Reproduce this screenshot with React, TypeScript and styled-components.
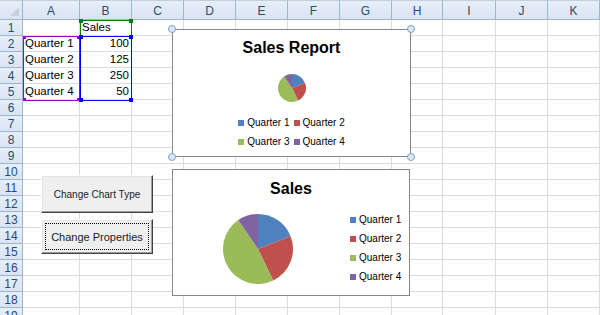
import React from 'react';
import styled, { createGlobalStyle, css } from 'styled-components';

const GlobalStyle = createGlobalStyle`
  html, body {
    margin: 0;
    padding: 0;
    background: #fff;
    overflow: hidden;
  }
  body {
    font-family: 'Liberation Sans', Arial, sans-serif;
  }
`;

const COLUMNS = ['A', 'B', 'C', 'D', 'E', 'F', 'G', 'H', 'I', 'J', 'K'];
const COLUMN_WIDTHS = [57, 52, 52, 52, 52, 52, 52, 51, 53, 52, 52];
const ROW_COUNT = 19;

const quarters = [
  { label: 'Quarter 1', value: 100, color: '#4F81BD' },
  { label: 'Quarter 2', value: 125, color: '#C0504D' },
  { label: 'Quarter 3', value: 250, color: '#9BBB59' },
  { label: 'Quarter 4', value: 50, color: '#8064A2' },
];

const cellData: Record<number, [string, string]> = {
  1: ['', 'Sales'],
  2: ['Quarter 1', '100'],
  3: ['Quarter 2', '125'],
  4: ['Quarter 3', '250'],
  5: ['Quarter 4', '50'],
};

type Corner = 'tl' | 'tr' | 'bl' | 'br';
const CORNERS: Corner[] = ['tl', 'tr', 'bl', 'br'];

const Sheet = styled.div`
  position: relative;
  width: 600px;
  height: 315px;
  overflow: hidden;
  display: grid;
  grid-template-columns: 23px ${COLUMN_WIDTHS.map((w) => `${w}px`).join(' ')};
  grid-template-rows: 20px repeat(${ROW_COUNT}, 16px);
  font-size: 11.5px;
  color: #000;
`;

const headerLook = css`
  background: linear-gradient(#e6eef9, #d9e4f3);
  color: #2b4a72;
  font-size: 12px;
  display: flex;
  align-items: center;
  justify-content: center;
  box-sizing: border-box;
  border-right: 1px solid #9eb6ce;
  border-bottom: 1px solid #9eb6ce;
`;

const CornerCell = styled.div`
  ${headerLook};
  border-top: 1px solid #c4cfdd;
  position: relative;

  &::after {
    content: '';
    position: absolute;
    right: 3px;
    bottom: 3px;
    border-left: 9px solid transparent;
    border-bottom: 9px solid #c9d1dc;
  }
`;

const ColumnHeader = styled.div`
  ${headerLook};
  border-top: 1px solid #c4cfdd;
  padding-top: 1px;
`;

const RowHeader = styled.div`
  ${headerLook};
`;

const Cell = styled.div<{ $numeric?: boolean }>`
  box-sizing: border-box;
  border-right: 1px solid #dadcdd;
  border-bottom: 1px solid #dadcdd;
  padding: 0 2px;
  line-height: 15px;
  white-space: nowrap;
  text-align: ${(p) => (p.$numeric ? 'right' : 'left')};
`;

/* coloured outlines Excel draws round the chart's source ranges */
const RangeOutline = styled.div<{ $color: string; $left: number; $top: number; $w: number; $h: number }>`
  position: absolute;
  box-sizing: border-box;
  left: ${(p) => p.$left}px;
  top: ${(p) => p.$top}px;
  width: ${(p) => p.$w}px;
  height: ${(p) => p.$h}px;
  border: 1px solid ${(p) => p.$color};
  pointer-events: none;
`;

const RangeHandle = styled.span<{ $color: string; $size: number; $corner: Corner }>`
  position: absolute;
  width: ${(p) => p.$size}px;
  height: ${(p) => p.$size}px;
  background: ${(p) => p.$color};
  ${(p) => (p.$corner[0] === 't' ? 'top' : 'bottom')}: -${(p) => Math.floor(p.$size / 2)}px;
  ${(p) => (p.$corner[1] === 'l' ? 'left' : 'right')}: -${(p) => Math.floor(p.$size / 2)}px;
`;

const ChartFrame = styled.div`
  position: absolute;
  left: 172px;
  box-sizing: border-box;
  background: #fff;
  border: 1px solid #868686;
  display: flex;
  flex-direction: column;
  align-items: center;
`;

const ReportChart = styled(ChartFrame)`
  top: 29px;
  width: 239px;
  height: 128px;
  padding-top: 8px;
`;

const SalesChart = styled(ChartFrame)`
  top: 169px;
  width: 238px;
  height: 127px;
  padding-top: 9px;
`;

const ChartTitle = styled.div`
  font-weight: bold;
  font-size: 16px;
  line-height: 20px;
  color: #000;
`;

const ChartHandle = styled.span<{ $corner: Corner }>`
  position: absolute;
  width: 6px;
  height: 6px;
  border-radius: 50%;
  background: #dbe7f5;
  border: 1px solid #7f9fc6;
  ${(p) => (p.$corner[0] === 't' ? 'top' : 'bottom')}: -5px;
  ${(p) => (p.$corner[1] === 'l' ? 'left' : 'right')}: -5px;
`;

const SmallPlot = styled.div`
  margin-top: 15px;
  line-height: 0;
`;

const GridLegend = styled.div`
  display: grid;
  grid-template-columns: auto auto;
  column-gap: 4px;
  row-gap: 7px;
  margin-top: 14px;
`;

const SalesBody = styled.div`
  display: flex;
  align-items: flex-start;
  align-self: stretch;
  padding-left: 49px;
  margin-top: 14px;
`;

const ColumnLegend = styled.div`
  display: flex;
  flex-direction: column;
  gap: 7px;
  margin-left: 56px;
  margin-top: 1px;
`;

const LegendItem = styled.div`
  display: flex;
  align-items: center;
  gap: 3px;
  font-size: 10px;
  line-height: 12px;
  color: #000;
  white-space: nowrap;
`;

const Swatch = styled.span<{ $color: string }>`
  width: 6px;
  height: 6px;
  background: ${(p) => p.$color};
`;

const MacroButton = styled.button`
  position: absolute;
  left: 41px;
  width: 112px;
  box-sizing: border-box;
  background: #efefef;
  border: 1px solid;
  border-color: #ffffff #404040 #404040 #ffffff;
  box-shadow: inset -1px -1px 0 #a0a0a0, inset 1px 1px 0 #e3e3e3;
  font-family: 'Liberation Sans', Arial, sans-serif;
  color: #1a1a2a;
  padding: 0;
  cursor: pointer;
`;

const ChartTypeButton = styled(MacroButton)`
  top: 175px;
  height: 38px;
  font-size: 10px;
`;

const PropertiesButton = styled(MacroButton)`
  top: 219px;
  height: 35px;
  font-size: 11px;

  &::after {
    content: '';
    position: absolute;
    inset: 3px;
    border: 1px dotted #000;
  }
`;

function Pie({ size, radius }: { size: number; radius: number }) {
  const total = quarters.reduce((s, q) => s + q.value, 0);
  const c = size / 2;
  let angle = 0;
  return (
    <svg width={size} height={size} viewBox={`0 0 ${size} ${size}`}>
      {quarters.map((q) => {
        const start = angle;
        const end = angle + (q.value / total) * Math.PI * 2;
        angle = end;
        const x1 = c + radius * Math.sin(start);
        const y1 = c - radius * Math.cos(start);
        const x2 = c + radius * Math.sin(end);
        const y2 = c - radius * Math.cos(end);
        const large = end - start > Math.PI ? 1 : 0;
        return (
          <path
            key={q.label}
            d={`M${c},${c} L${x1},${y1} A${radius},${radius} 0 ${large} 1 ${x2},${y2} Z`}
            fill={q.color}
          />
        );
      })}
    </svg>
  );
}

function Legend() {
  return (
    <>
      {quarters.map((q) => (
        <LegendItem key={q.label}>
          <Swatch $color={q.color} />
          {q.label}
        </LegendItem>
      ))}
    </>
  );
}

export default function App() {
  const rows = Array.from({ length: ROW_COUNT }, (_, i) => i + 1);

  return (
    <>
      <GlobalStyle />
      <Sheet>
        <CornerCell />
        {COLUMNS.map((c) => (
          <ColumnHeader key={c}>{c}</ColumnHeader>
        ))}
        {rows.map((r) => (
          <React.Fragment key={r}>
            <RowHeader>{r}</RowHeader>
            {COLUMNS.map((c, ci) => {
              const row = cellData[r];
              const text = row && ci < 2 ? row[ci] : '';
              return (
                <Cell key={c} $numeric={ci === 1 && r > 1}>
                  {text}
                </Cell>
              );
            })}
          </React.Fragment>
        ))}

        <RangeOutline $color="#008000" $left={80} $top={20} $w={52} $h={17}>
          <RangeHandle $color="#008000" $size={4} $corner="tl" />
          <RangeHandle $color="#008000" $size={4} $corner="tr" />
        </RangeOutline>
        <RangeOutline $color="#9b00d3" $left={23} $top={36} $w={57} $h={65}>
          {CORNERS.map((k) => (
            <RangeHandle key={k} $color="#9b00d3" $size={3} $corner={k} />
          ))}
        </RangeOutline>
        <RangeOutline $color="#0000ff" $left={80} $top={36} $w={52} $h={65}>
          {CORNERS.map((k) => (
            <RangeHandle key={k} $color="#0000ff" $size={4} $corner={k} />
          ))}
        </RangeOutline>

        <ReportChart>
          <ChartTitle>Sales Report</ChartTitle>
          <SmallPlot>
            <Pie size={30} radius={14} />
          </SmallPlot>
          <GridLegend>
            <Legend />
          </GridLegend>
          {CORNERS.map((k) => (
            <ChartHandle key={k} $corner={k} />
          ))}
        </ReportChart>

        <SalesChart>
          <ChartTitle>Sales</ChartTitle>
          <SalesBody>
            <Pie size={72} radius={35} />
            <ColumnLegend>
              <Legend />
            </ColumnLegend>
          </SalesBody>
        </SalesChart>

        <ChartTypeButton>Change Chart Type</ChartTypeButton>
        <PropertiesButton>Change Properties</PropertiesButton>
      </Sheet>
    </>
  );
}
